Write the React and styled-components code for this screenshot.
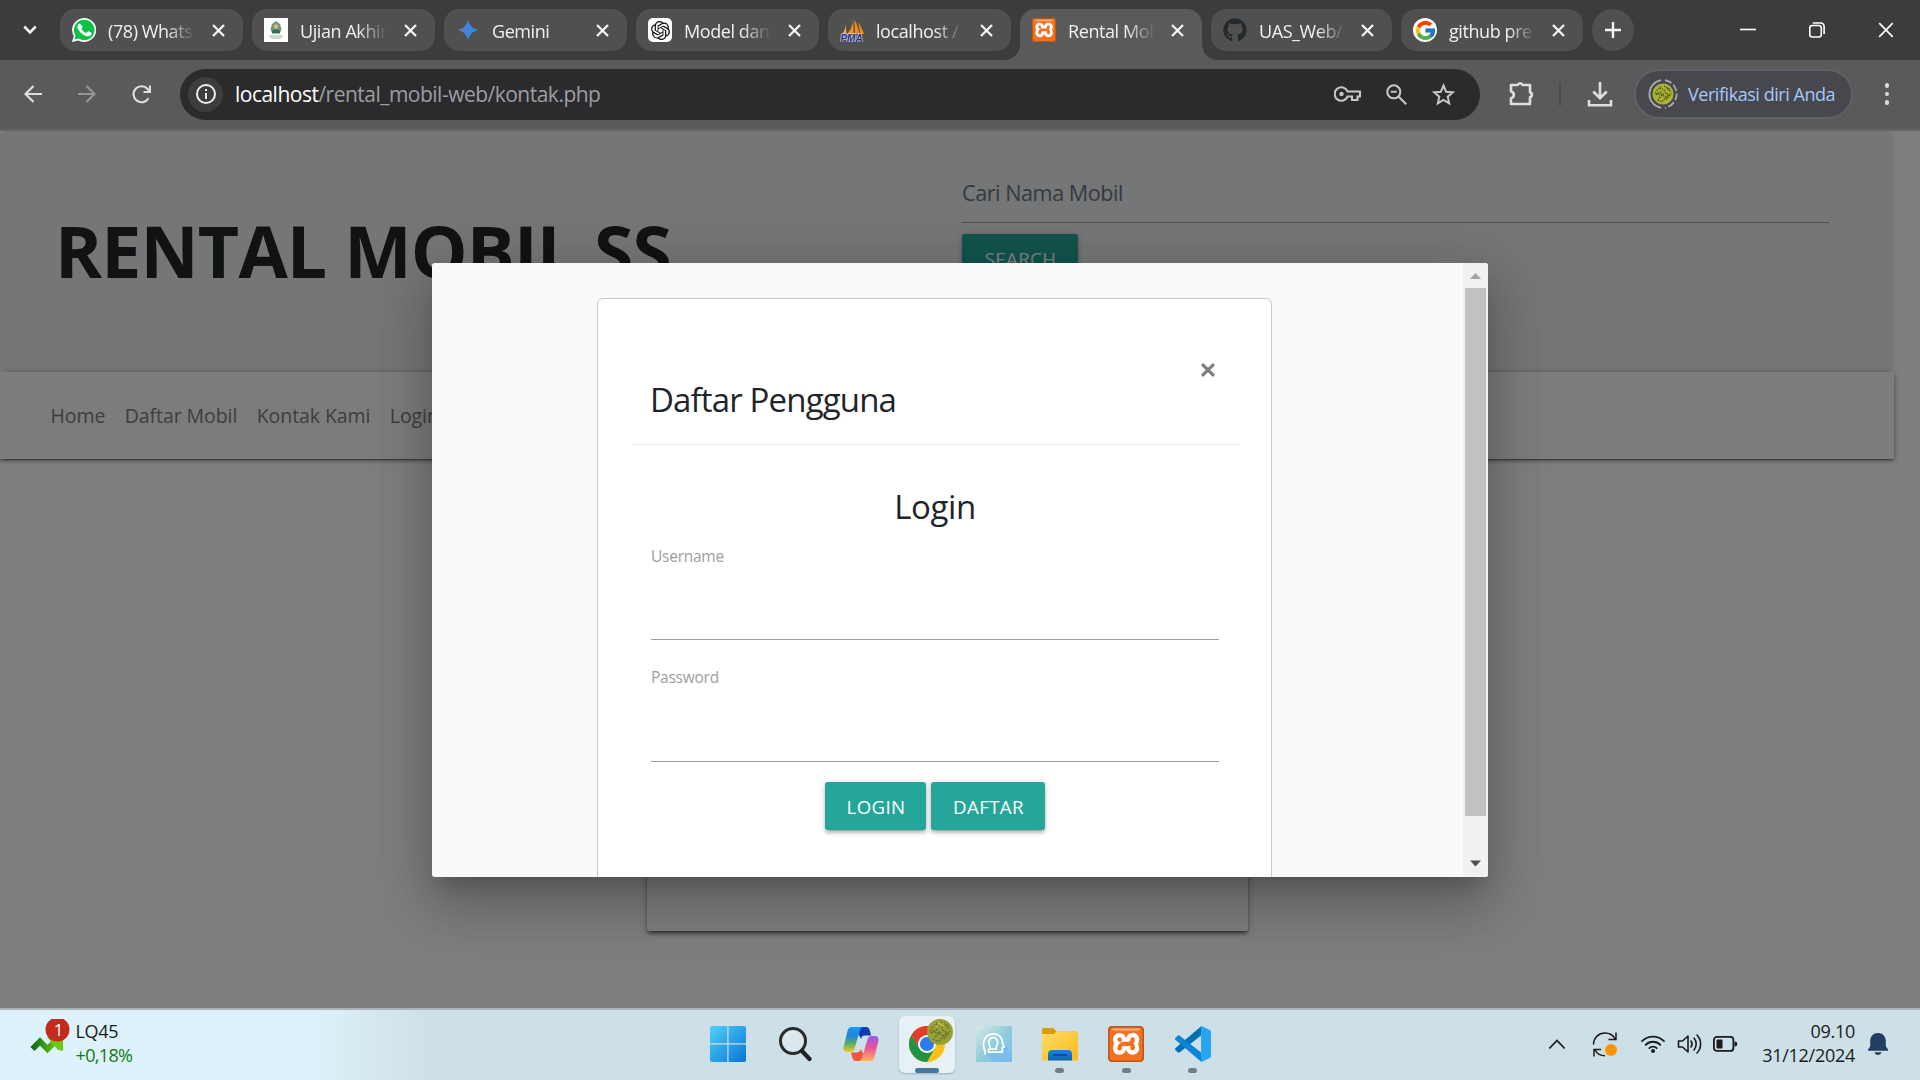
import React from "react";
import styled, { createGlobalStyle, css } from "styled-components";
import { FaGithub } from "react-icons/fa";
import { SiXampp, SiOpenai } from "react-icons/si";
import { FcGoogle } from "react-icons/fc";

const GlobalStyle = createGlobalStyle`
  *, *::before, *::after { box-sizing: border-box; }
  body {
    margin: 0;
    overflow: hidden;
    font-family: "Open Sans", "Noto Sans", sans-serif;
    background: #808080;
  }
  svg { display: block; flex: none; }
`;

const Screen = styled.div`
  display: flex;
  flex-direction: column;
  width: 1920px;
  height: 1080px;
  overflow: hidden;
`;

/* ---------- browser chrome ---------- */

const TabStrip = styled.div`
  display: flex;
  align-items: flex-start;
  gap: 9px;
  height: 60px;
  padding-top: 9px;
  background: #3c3c3c;
`;

const TabSearch = styled.div`
  display: flex;
  align-items: center;
  justify-content: center;
  width: 60px;
  height: 42px;
  margin-right: -9px;
`;

const Tab = styled.div`
  position: relative;
  display: flex;
  align-items: center;
  flex: none;
  width: ${(p) => p.$w}px;
  height: 42px;
  padding: 0 18px 0 12px;
  border-radius: 15px;
  background: #505050;
  ${(p) =>
    p.$active &&
    css`
      height: 51px;
      padding-bottom: 9px;
      border-radius: 15px 15px 0 0;
      background: #5a5a5a;
      &::before,
      &::after {
        content: "";
        position: absolute;
        bottom: 0;
        width: 15px;
        height: 15px;
      }
      &::before {
        left: -15px;
        background: radial-gradient(circle at 0 0, transparent 14.5px, #5a5a5a 15px);
      }
      &::after {
        right: -15px;
        background: radial-gradient(circle at 100% 0, transparent 14.5px, #5a5a5a 15px);
      }
    `}
`;

const Favicon = styled.div`
  display: flex;
  align-items: center;
  justify-content: center;
  width: 24px;
  height: 24px;
  overflow: hidden;
  border-radius: ${(p) => p.$radius || 0};
  background: ${(p) => p.$bg || "transparent"};
`;

const TabTitle = styled.div`
  width: 92px;
  margin: 2px 0 0 12px;
  overflow: hidden;
  white-space: nowrap;
  font-size: 18px;
  line-height: 24px;
  letter-spacing: -0.42px;
  color: #f0f0f0;
  mask-image: linear-gradient(90deg, #000 58px, transparent 87px);
`;

const TabClose = styled.div`
  margin-left: auto;
`;

const NewTab = styled.div`
  display: flex;
  align-items: center;
  justify-content: center;
  flex: none;
  width: 42px;
  height: 42px;
  border-radius: 50%;
  background: #505050;
`;

const WindowControls = styled.div`
  display: flex;
  height: 42px;
  margin-left: auto;
`;

const WindowControl = styled.div`
  display: flex;
  align-items: center;
  justify-content: center;
  width: 69px;
`;

const Toolbar = styled.div`
  display: flex;
  align-items: center;
  height: 71px;
  padding: 0 0 1px 6px;
  border-bottom: 2px solid #666;
  background: #5a5a5a;
`;

const NavButton = styled.div`
  display: flex;
  align-items: center;
  justify-content: center;
  width: 54px;
  height: 50px;
  opacity: ${(p) => (p.$dim ? 0.45 : 1)};
`;

const Omnibox = styled.div`
  display: flex;
  align-items: center;
  width: 1300px;
  height: 51px;
  margin-left: 12px;
  padding: 0 25px 0 8px;
  border-radius: 26px;
  background: #2b2b2d;
`;

const SiteInfo = styled.div`
  display: flex;
  align-items: center;
  justify-content: center;
  width: 35px;
  height: 35px;
  border-radius: 50%;
  background: #3d3d3f;
`;

const Url = styled.div`
  flex: 1;
  margin: 0 0 0 12px;
  font-size: 21px;
  line-height: 30px;
  letter-spacing: -0.51px;
  color: #9c9ea2;
  b {
    font-weight: 400;
    color: #fff;
  }
`;

const OmniboxIcons = styled.div`
  display: flex;
  align-items: center;
  gap: 25px;
`;

const Extensions = styled.div`
  margin-left: 27px;
`;

const Separator = styled.div`
  width: 2px;
  height: 24px;
  margin: 0 25px 0 24px;
  background: #4c4c4c;
`;

const Profile = styled.div`
  display: flex;
  align-items: center;
  gap: 10px;
  width: 219px;
  height: 50px;
  margin-left: 20px;
  padding-left: 12px;
  border: 2px solid #5e6166;
  border-radius: 25px;
  background: #46484d;
  font-size: 18px;
  line-height: 24px;
  letter-spacing: -0.45px;
  white-space: nowrap;
  color: #a8c7fa;
`;

const MenuDots = styled.div`
  display: flex;
  flex-direction: column;
  align-items: center;
  gap: 4px;
  width: 14px;
  margin-left: 27px;
  i {
    width: 4.5px;
    height: 4.5px;
    border-radius: 50%;
    background: #dcdcdc;
  }
`;

/* ---------- web page ---------- */

const Page = styled.div`
  position: relative;
  height: 877px;
  overflow: hidden;
  background: #fdfdfd;
  color: #212529;
`;

const Jumbotron = styled.header`
  display: flex;
  width: 1894px;
  height: 241px;
  border-radius: 7px;
  background: #e9ecef;
`;

const SiteTitle = styled.h1`
  width: 908px;
  margin: 0;
  padding: 77px 0 0 55px;
  font-size: 71.5px;
  font-weight: 700;
  line-height: 86px;
  letter-spacing: -0.85px;
`;

const SearchForm = styled.div`
  width: 867px;
  margin-left: 54px;
`;

const SearchField = styled.div`
  height: 92px;
  padding-top: 47px;
  border-bottom: 1px solid #9e9e9e;
  font-size: 21.6px;
  line-height: 30px;
  letter-spacing: -0.45px;
  color: #6c757d;
`;

const Button = styled.button`
  display: inline-flex;
  align-items: center;
  justify-content: center;
  width: ${(p) => p.$w}px;
  height: 48px;
  padding: 0 0 0 1px;
  border: 0;
  border-radius: 2.7px;
  background: #26a69a;
  color: #fff;
  font-family: inherit;
  font-size: 18.7px;
  letter-spacing: 0.35px;
  box-shadow: 0 2.7px 2.7px 0 rgba(0, 0, 0, 0.14), 0 4px 1.4px -2.7px rgba(0, 0, 0, 0.12),
    0 1.4px 6.8px 0 rgba(0, 0, 0, 0.2);
`;

const SearchButton = styled(Button)`
  margin-top: 11px;
`;

const NavBar = styled.nav`
  position: relative;
  display: flex;
  align-items: center;
  gap: 19.5px;
  width: 1894px;
  height: 87px;
  padding-left: 50.5px;
  background: #f8f8f8;
  font-size: 19.5px;
  line-height: 30px;
  letter-spacing: -0.08px;
  color: #7c7c7c;
  box-shadow: 0 2.7px 2.7px 0 rgba(0, 0, 0, 0.28), 0 4px 1.4px -2.7px rgba(0, 0, 0, 0.24),
    0 1.4px 6.8px 0 rgba(0, 0, 0, 0.3);
`;

const ContactCard = styled.section`
  width: 601px;
  height: 422px;
  margin: 50px 0 0 646.5px;
  border-radius: 2.7px;
  background: #fff;
  box-shadow: 0 2.7px 2.7px 0 rgba(0, 0, 0, 0.28), 0 4px 1.4px -2.7px rgba(0, 0, 0, 0.24),
    0 1.4px 6.8px 0 rgba(0, 0, 0, 0.3);
`;

const Overlay = styled.div`
  position: absolute;
  inset: 0;
  background: rgba(0, 0, 0, 0.5);
`;

const Modal = styled.div`
  position: absolute;
  top: 132px;
  left: 432px;
  display: flex;
  width: 1056px;
  height: 614px;
  overflow: hidden;
  border-radius: 2.7px;
  background: #fafafa;
  box-shadow: 0 32px 51px 4px rgba(0, 0, 0, 0.14), 0 12px 62px 11px rgba(0, 0, 0, 0.12),
    0 15px 20px -9px rgba(0, 0, 0, 0.2);
`;

const ModalContent = styled.div`
  flex: 1;
  padding: 35px 0 0 165px;
`;

const Dialog = styled.div`
  width: 675px;
  height: 760px;
  padding: 0 32px 0 33px;
  border: 1px solid #c8c8c8;
  border-radius: 6px;
  background: #fff;
`;

const DialogHeader = styled.div`
  display: flex;
  flex-direction: column;
  height: 146px;
  padding: 60px 18px 0 19px;
  border-bottom: 1px solid #e9ecef;
`;

const DialogClose = styled.div`
  display: flex;
  align-items: center;
  justify-content: center;
  align-self: flex-end;
  width: 22px;
  height: 22px;
  margin-right: 2px;
`;

const Heading = styled.h5`
  margin: ${(p) => (p.$center ? "1px 0 17px" : "-3px 0 0")};
  text-align: ${(p) => (p.$center ? "center" : "left")};
  font-size: 33px;
  font-weight: 400;
  line-height: 44px;
  letter-spacing: ${(p) => (p.$center ? "-0.4px" : "-0.85px")};
`;

const DialogBody = styled.div`
  display: flex;
  flex-direction: column;
  padding: 39px 20px 0;
`;

const Field = styled.label`
  display: block;
  height: ${(p) => p.$h}px;
  margin-bottom: ${(p) => p.$gap}px;
  border-bottom: 1px solid #9e9e9e;
  font-size: 15.5px;
  line-height: 21px;
  letter-spacing: -0.25px;
  color: #9e9e9e;
`;

const Actions = styled.div`
  display: flex;
  justify-content: center;
  gap: 5px;
`;

const Scrollbar = styled.div`
  display: flex;
  flex-direction: column;
  align-items: center;
  width: 25px;
  padding-top: 10px;
  background: #f1f1f1;
`;

const ScrollThumb = styled.div`
  width: 21px;
  height: 528px;
  margin: 8px 0 44px;
  background: #c1c1c1;
`;

/* ---------- taskbar ---------- */

const Taskbar = styled.footer`
  display: flex;
  height: 72px;
  border-top: 2px solid #aab4b8;
  background: linear-gradient(90deg, #def2fb 0, #def2fb 310px, #cddfe7 430px, #cde0e8 100%);
  font-size: 18px;
  line-height: 24px;
  color: #1b1b1b;
`;

const StockWidget = styled.div`
  display: flex;
  width: 695px;
  padding: 9px 0 0 30px;
`;

const StockText = styled.div`
  margin-left: 5.5px;
  letter-spacing: -0.3px;
`;

const Change = styled.div`
  letter-spacing: -0.65px;
  color: #0f7b0f;
`;

const Apps = styled.div`
  display: flex;
`;

const AppButton = styled.div`
  display: flex;
  flex-direction: column;
  align-items: center;
  width: 66.35px;
  padding-top: 6px;
`;

const AppTile = styled.div`
  display: flex;
  align-items: center;
  justify-content: center;
  width: 56px;
  height: 57px;
  padding-bottom: 2px;
  border-radius: 6px;
  background: ${(p) => (p.$active ? "#e7f0f4" : "transparent")};
  box-shadow: ${(p) => (p.$active ? "0 1px 2px rgba(0,0,0,.22)" : "none")};
`;

const Indicator = styled.div`
  z-index: 1;
  width: ${(p) => (p.$active ? 24 : 9)}px;
  height: 5px;
  margin-top: -5px;
  border-radius: 3px;
  background: ${(p) => (p.$active ? "#46789e" : "#737d82")};
`;

const Tray = styled.div`
  display: flex;
  flex: 1;
  align-items: center;
  justify-content: flex-end;
  padding: 0 31px 2px 0;
`;

const TrayIcon = styled.div`
  margin-right: ${(p) => p.$gap}px;
`;

const Clock = styled.div`
  width: 94px;
  margin: -2px 12px 0 0;
  text-align: right;
  letter-spacing: -0.28px;
`;

/* ---------- drawings ---------- */

const Cross = ({ size = 13, color = "#f4f4f4", weight = 2.3 }) => (
  <svg width={size} height={size} viewBox="0 0 13 13" stroke={color} strokeWidth={weight}>
    <path d="M1 1l11 11M12 1L1 12" />
  </svg>
);

const WhatsAppIcon = () => (
  <svg width="24" height="24" viewBox="0 0 24 24">
    <path d="M12 0a12 12 0 0 0-10.3 18L0 24l6.200-1.600A12 12 0 1 0 12 0z" fill="#fff" />
    <path d="M12 1.800a10.200 10.200 0 0 0-8.500 15.600L2.400 21.600l4.300-1.100A10.200 10.200 0 1 0 12 1.800z" fill="#0cc143" />
    <path d="M8.400 6.300c-.3-.6-.5-.6-.9-.6-1.100 0-2.100 1.200-2.100 3 0 1.700 1.200 3.300 1.400 3.500.2.300 2.400 3.800 6 5.200 2.900 1.100 3.500.9 4.200.8.700-.1 2.100-.9 2.300-1.700.3-.8.300-1.500.2-1.700-.1-.2-.4-.3-.9-.5l-2-1c-.4-.1-.6-.1-.8.200l-1 1.300c-.2.200-.4.200-.8 0-2-.9-3.300-2-4.400-3.900-.2-.3 0-.5.200-.7l.8-1.100c.1-.3.100-.4 0-.7z" fill="#fff" />
  </svg>
);

const CampusIcon = () => (
  <svg width="24" height="24" viewBox="0 0 24 24">
    <path fill="#fff" d="M0 0h24v24H0z" />
    <path d="M12 3l4 3 1.500 5-1.500 4H8l-1.500-4L8 6z" fill="#6f9a76" />
    <path d="M12 5.500l2.500 3-2.500 3-2.500-3z" fill="#e2b48e" />
    <path d="M8 12.500c2-1.500 6-1.500 8 0v3H8z" fill="#31724a" />
    <path d="M5 18h14M7 20h10" stroke="#8fb5a4" strokeWidth="1.200" />
  </svg>
);

const GeminiIcon = () => (
  <svg width="22" height="22" viewBox="0 0 24 24">
    <defs>
      <linearGradient id="gem" x1="0" y1="0" x2="1" y2="0">
        <stop offset="0" stopColor="#8e6bc4" />
        <stop offset=".45" stopColor="#3f83d8" />
        <stop offset="1" stopColor="#2196e8" />
      </linearGradient>
    </defs>
    <path d="M12 0c.9 6.500 5 11 12 12-7 1-11.100 5.500-12 12-.9-6.500-5-11-12-12C7 11 11.100 6.500 12 0z" fill="url(#gem)" />
  </svg>
);

const PmaIcon = () => (
  <svg width="24" height="24" viewBox="0 0 24 24">
    <path d="M5.500 4.500c.5 5-.8 8.500-3.500 11.500h4.500z" fill="#f5a94a" />
    <path d="M13 0c.3 6-2 12-6 16h6.500z" fill="#f7941d" />
    <path d="M14.500 1.500c0 5 .2 10 .4 14.500h4.600C18.500 11 17 6 14.500 1.500zM18 4c1 4 1.800 8 2.400 12H24c-1.500-4.500-3.500-8.500-6-12z" fill="#f08c14" />
    <text x="11.500" y="23.500" textAnchor="middle" fontFamily="Liberation Sans, sans-serif" fontSize="10" fontWeight="700" fontStyle="italic" fill="#2b3170" stroke="#c9cbe8" strokeWidth="1.500" paintOrder="stroke">
      PMA
    </text>
  </svg>
);

const XamppIcon = ({ size }) => (
  <svg width={size} height={size} viewBox="0 0 36 36">
    <rect x="4" y="5" width="28" height="27" fill="#fff" />
    <SiXampp size={36} color="#f3711f" />
    <rect x=".8" y=".8" width="34.400" height="34.400" rx="3.500" fill="none" stroke="#b9581c" strokeWidth="1.600" />
    <path d="M4 2.500h28c0 1.600-1.500 2-3 2H7c-1.500 0-3-.4-3-2z" fill="#f3b793" />
  </svg>
);

const olive = [
  [5, 9, 10, 4], [9, 5, 16, 9], [14, 3, 21, 7], [4, 14, 11, 10], [8, 18, 14, 12], [12, 22, 20, 14],
  [17, 20, 23, 12], [15, 11, 22, 15], [6, 20, 12, 23], [10, 13, 17, 17], [3, 11, 9, 14], [18, 6, 23, 10],
];

const Avatar = ({ size }) => (
  <svg width={size} height={size} viewBox="0 0 26 26">
    <circle cx="13" cy="13" r="13" fill="#98a136" />
    <path d="M5 7c6-6 14-4 16 1-5-1-8 2-16-1z" fill="#b2ba42" />
    {olive.map(([a, b, c, d], i) => (
      <path key={i} d={`M${a} ${b}L${c} ${d}`} stroke="#676e32" strokeWidth="1.600" strokeDasharray="1.800 1.200" />
    ))}
  </svg>
);

const ProfileAvatar = () => (
  <svg width="30" height="30" viewBox="0 0 30 30">
    <g transform="translate(4.500 4.500) scale(.81)">
      <circle cx="13" cy="13" r="13" fill="#aab52f" />
      {olive.map(([a, b, c, d], i) => (
        <path key={i} d={`M${a} ${b}L${c} ${d}`} stroke="#4f5724" strokeWidth="1.600" strokeDasharray="2 1" />
      ))}
    </g>
    <path d="M13 1.200a14 14 0 0 0 0 27.600" fill="none" stroke="#a9abb0" strokeWidth="1.800" />
    <path d="M17 1.200a14 14 0 0 1 0 27.600" fill="none" stroke="#a9abb0" strokeWidth="1.800" strokeDasharray="7 2.500" />
  </svg>
);

const WindowsIcon = () => (
  <svg width="36" height="36" viewBox="0 0 36 36">
    <defs>
      <linearGradient id="win" x1="0" y1="0" x2="1" y2="1">
        <stop offset="0" stopColor="#4fd0fb" />
        <stop offset="1" stopColor="#0a74d2" />
      </linearGradient>
    </defs>
    <path d="M2 0h15.300v17.300H0V2a2 2 0 0 1 2-2zM18.500 0H34a2 2 0 0 1 2 2v15.300H18.500zM0 18.600h17.300V36H2a2 2 0 0 1-2-2zM18.500 18.600H36V34a2 2 0 0 1-2 2H18.500z" fill="url(#win)" />
  </svg>
);

const SearchIcon = () => (
  <svg width="34" height="36" viewBox="0 0 34 36" fill="none">
    <circle cx="15" cy="15" r="12.500" stroke="#2b2b2b" strokeWidth="3" fill="#dbe7ec" />
    <path d="M24 25l7.500 8" stroke="#222" strokeWidth="4.200" strokeLinecap="round" />
  </svg>
);

const CopilotIcon = () => (
  <svg width="36" height="36" viewBox="0 0 36 36">
    <defs>
      <linearGradient id="cp1" x1="0" y1="0" x2="0" y2="1">
        <stop offset="0" stopColor="#1a9cf0" />
        <stop offset=".35" stopColor="#1f86dc" />
        <stop offset=".65" stopColor="#4fae6c" />
        <stop offset="1" stopColor="#f2cc1c" />
      </linearGradient>
      <linearGradient id="cp2" x1="0" y1="0" x2="0" y2="1">
        <stop offset="0" stopColor="#9b56ee" />
        <stop offset=".5" stopColor="#ee5591" />
        <stop offset="1" stopColor="#ffb457" />
      </linearGradient>
    </defs>
    <path d="M16 1h7c2 0 3 1 3.600 3l1.600 5.500h-6c-2.500 0-3.500 1-4.200 3.500L14 5z" fill="#1339b8" />
    <path d="M20 35h-7c-2 0-3-1-3.600-3L8 26.500h5.500c2.500 0 3.500-1 4.200-3.500L22 31z" fill="#f2563c" />
    <path d="M8.500 1H20c-2 .6-2.700 2-3.300 4l-5 17c-.9 3-2 4-4.500 4H4C.8 26 0 23.500.7 20.500L4.500 5C5.200 2.200 6.300 1 8.500 1z" fill="url(#cp1)" />
    <path d="M27.500 35H16c2-.6 2.700-2 3.300-4l5-17c.9-3 2-4 4.500-4H32c3.200 0 4 2.500 3.300 5.500L31.500 31c-.7 2.800-1.800 4-4 4z" fill="url(#cp2)" />
  </svg>
);

const AvatarBadge = styled.div`
  position: absolute;
  top: -7px;
  left: 18px;
`;

const ChromeBox = styled.div`
  position: relative;
`;

const ChromeIcon = () => (
  <ChromeBox>
    <svg width="36" height="36" viewBox="0 0 36 36">
      <circle cx="18" cy="18" r="18" fill="#fbc116" />
      <path d="M18 9h15.600A18 18 0 0 0 2.400 9l7.800 13.500z" fill="#e33b2e" />
      <path d="M2.400 9A18 18 0 0 0 18 36l7.800-13.500H10.200z" fill="#229342" />
      <circle cx="18" cy="18" r="9" fill="#fff" />
      <circle cx="18" cy="18" r="7.100" fill="#2d7bf0" />
    </svg>
    <AvatarBadge>
      <Avatar size={26} />
    </AvatarBadge>
  </ChromeBox>
);

const HeadIcon = () => (
  <svg width="36" height="36" viewBox="0 0 36 36" fill="none">
    <defs>
      <linearGradient id="hd" x1="0" y1="0" x2="1" y2="1">
        <stop offset="0" stopColor="#d8e9e8" />
        <stop offset=".5" stopColor="#8fcdd6" />
        <stop offset="1" stopColor="#7cc0f2" />
      </linearGradient>
    </defs>
    <path d="M0 0h36v36H0z" fill="url(#hd)" />
    <path d="M10 28l8 8h18V26l-8-8-2 8z" fill="#7cbcec" />
    <path d="M9 28.500V25C5.500 18 8 8 17 7.800c6.500 0 9.500 4.700 9.500 9.200l1.700 3.800-1.900.7v4.700H12.500v-3.500" stroke="#fff" strokeWidth="1.800" />
    <path d="M14 23v-2.800c-3-4-.5-8.700 3.200-8.700s6.100 4.700 3.200 8.700V23z" stroke="#fff" strokeWidth="1.600" />
  </svg>
);

const FolderIcon = () => (
  <svg width="36" height="36" viewBox="0 0 36 36">
    <defs>
      <linearGradient id="fo" x1="0" y1="0" x2="1" y2="1">
        <stop offset="0" stopColor="#ffdc6b" />
        <stop offset="1" stopColor="#fcba14" />
      </linearGradient>
      <linearGradient id="fb" x1="0" y1="0" x2="0" y2="1">
        <stop offset="0" stopColor="#1287dc" />
        <stop offset="1" stopColor="#0a62b4" />
      </linearGradient>
    </defs>
    <path d="M0 4c0-1.200.6-2 1.800-2h9.400l3.500 3.500H34V12H0z" fill="#dc9a08" />
    <path d="M0 8h11.500l3.500-2.700h19c1.200 0 2 .6 2 1.700v27.500H0z" fill="url(#fo)" />
    <path d="M6 34.500V28c0-2.600 1.600-4 4-4h16c2.500 0 4 1.400 4 4v6.500z" fill="url(#fb)" />
    <path d="M11 29h14" stroke="#0a4a90" strokeWidth="1.600" />
  </svg>
);

const VsCodeIcon = () => (
  <svg width="36" height="36" viewBox="0 0 36 36">
    <path d="M26.500 0L26 9.500 4.800 26.300c-.6.500-1.400.4-2 0L.6 24.300c-.8-.7-.8-1.700 0-2.400z" fill="#0070b5" />
    <path d="M26.500 36L26 26.500 4.800 9.700c-.6-.5-1.400-.4-2 0L.6 11.700c-.8.700-.8 1.700 0 2.400z" fill="#0a86d4" />
    <path d="M26.500 0L34.800 4c.8.400 1.200 1 1.200 1.900v24.200c0 .9-.4 1.500-1.200 1.900L26.500 36c-.6.200-.4-.3-.4-1V1c0-.8-.2-1 .4-1z" fill="#27a4f2" />
  </svg>
);

const tabs = [
  { title: "(78) Whats", w: 183, icon: <WhatsAppIcon /> },
  { title: "Ujian Akhir", w: 183, icon: <CampusIcon /> },
  { title: "Gemini", w: 183, icon: <GeminiIcon /> },
  { title: "Model dan", w: 183, icon: <SiOpenai size={19} color="#111" />, bg: "#fff", radius: "5px" },
  { title: "localhost /", w: 183, icon: <PmaIcon /> },
  { title: "Rental Mob", w: 182, icon: <XamppIcon size={24} />, active: true },
  { title: "UAS_Web/", w: 181, icon: <FaGithub size={24} color="#24292e" /> },
  { title: "github pre", w: 182, icon: <FcGoogle size={23} />, bg: "#fff", radius: "50%" },
];

const apps = [
  { icon: <WindowsIcon /> },
  { icon: <SearchIcon /> },
  { icon: <CopilotIcon /> },
  { icon: <ChromeIcon />, active: true, running: true },
  { icon: <HeadIcon /> },
  { icon: <FolderIcon />, running: true },
  { icon: <XamppIcon size={36} />, running: true },
  { icon: <VsCodeIcon />, running: true },
];

function Browser() {
  return (
    <>
      <TabStrip>
        <TabSearch>
          <svg width="14" height="10" viewBox="0 0 14 10" fill="none" stroke="#f4f4f4" strokeWidth="2.600">
            <path d="M1.300 1.500L7 7.300l5.700-5.800" />
          </svg>
        </TabSearch>
        {tabs.map((t) => (
          <Tab key={t.title} $w={t.w} $active={t.active}>
            <Favicon $bg={t.bg} $radius={t.radius}>{t.icon}</Favicon>
            <TabTitle>{t.title}</TabTitle>
            <TabClose><Cross /></TabClose>
          </Tab>
        ))}
        <NewTab>
          <svg width="16" height="16" viewBox="0 0 16 16" stroke="#f4f4f4" strokeWidth="2.400">
            <path d="M8 0v16M0 8h16" />
          </svg>
        </NewTab>
        <WindowControls>
          <WindowControl>
            <svg width="16" height="16" viewBox="0 0 16 16" stroke="#fff" strokeWidth="1.600"><path d="M0 7.500h16" /></svg>
          </WindowControl>
          <WindowControl>
            <svg width="16" height="16" viewBox="0 0 16 16" fill="none" stroke="#fff" strokeWidth="1.600">
              <rect x=".8" y="3.500" width="11.500" height="11.500" rx="2.500" />
              <path d="M3.800 1h8a3.300 3.300 0 0 1 3.300 3.300V12" />
            </svg>
          </WindowControl>
          <WindowControl>
            <Cross size={16} color="#fff" weight={1.4} />
          </WindowControl>
        </WindowControls>
      </TabStrip>
      <Toolbar>
        <NavButton>
          <svg width="18" height="18" viewBox="0 0 18 18" fill="none" stroke="#dedede" strokeWidth="2.200"><path d="M18 9H1.500M9.500 1L1.500 9l8 8" /></svg>
        </NavButton>
        <NavButton $dim>
          <svg width="18" height="18" viewBox="0 0 18 18" fill="none" stroke="#dedede" strokeWidth="2.200"><path d="M0 9h16.500M8.500 1l8 8-8 8" /></svg>
        </NavButton>
        <NavButton>
          <svg width="19" height="19" viewBox="0 0 19 19" fill="none" stroke="#dedede" strokeWidth="2.200">
            <path d="M16.500 13.200A8 8 0 1 1 15.600 4L18 6.500M18 .5v6.500h-6.500" />
          </svg>
        </NavButton>
        <Omnibox>
          <SiteInfo>
            <svg width="20" height="20" viewBox="0 0 20 20" fill="none" stroke="#eee" strokeWidth="2">
              <circle cx="10" cy="10" r="9" />
              <path d="M10 9v6M10 5v2" />
            </svg>
          </SiteInfo>
          <Url><b>localhost</b>/rental_mobil-web/kontak.php</Url>
          <OmniboxIcons>
            <svg width="27" height="16" viewBox="0 0 27 16" fill="none" stroke="#c7c7c7" strokeWidth="2.100">
              <path d="M13.600 5.500A6.700 6.700 0 1 0 13.600 10.500H18v3.500h5.500v-3.500H26V5.500z" />
              <circle cx="7.500" cy="8" r="2.200" fill="#c7c7c7" stroke="none" />
            </svg>
            <svg width="21" height="21" viewBox="0 0 21 21" fill="none" stroke="#c7c7c7" strokeWidth="2.100">
              <circle cx="7.800" cy="7.800" r="6.500" />
              <path d="M12.500 12.500l7.700 7.700M4.800 7.800h6" />
            </svg>
            <svg width="23" height="23" viewBox="0 0 23 23" fill="none" stroke="#c7c7c7" strokeWidth="2">
              <path d="M11.500 2.500l2.600 6.200 6.700.6-5.100 4.400 1.500 6.600-5.700-3.500-5.700 3.500 1.500-6.600-5.100-4.400 6.700-.6z" />
            </svg>
          </OmniboxIcons>
        </Omnibox>
        <Extensions>
          <svg width="28" height="28" viewBox="0 0 28 28" fill="none" stroke="#dedede" strokeWidth="2.600">
            <path d="M4 5h6.800a2.400 2.400 0 0 1 4.600 0H23v7.200a2.600 2.600 0 0 1 0 5V24H4v-5.800a3.400 3.400 0 0 0 0-6.700z" strokeLinejoin="round" />
          </svg>
        </Extensions>
        <Separator />
        <svg width="28" height="28" viewBox="0 0 28 28" fill="none" stroke="#dedede" strokeWidth="2.600">
          <path d="M14 2v16M7.300 11.500l6.700 6.700 6.700-6.700M3 20v5.200h22V20" />
        </svg>
        <Profile>
          <ProfileAvatar />
          Verifikasi diri Anda
        </Profile>
        <MenuDots><i /><i /><i /></MenuDots>
      </Toolbar>
    </>
  );
}

function RentalPage() {
  return (
    <Page>
      <Jumbotron>
        <SiteTitle>RENTAL MOBIL SS</SiteTitle>
        <SearchForm>
          <SearchField>Cari Nama Mobil</SearchField>
          <SearchButton $w={116}>SEARCH</SearchButton>
        </SearchForm>
      </Jumbotron>
      <NavBar>
        <span>Home</span>
        <span>Daftar Mobil</span>
        <span>Kontak Kami</span>
        <span>Login</span>
      </NavBar>
      <ContactCard />
      <Overlay />
      <Modal>
        <ModalContent>
          <Dialog>
            <DialogHeader>
              <DialogClose><Cross size={14} color="#7d7d7d" weight={2.8} /></DialogClose>
              <Heading>Daftar Pengguna</Heading>
            </DialogHeader>
            <DialogBody>
              <Heading $center>Login</Heading>
              <Field $h={94} $gap={27}>Username</Field>
              <Field $h={95} $gap={20}>Password</Field>
              <Actions>
                <Button $w={101}>LOGIN</Button>
                <Button $w={114}>DAFTAR</Button>
              </Actions>
            </DialogBody>
          </Dialog>
        </ModalContent>
        <Scrollbar>
          <svg width="11" height="7" viewBox="0 0 11 7"><path d="M5.500 0L11 6H0z" fill="#a3a3a3" /></svg>
          <ScrollThumb />
          <svg width="11" height="7" viewBox="0 0 11 7"><path d="M5.500 6.500L11 .5H0z" fill="#505050" /></svg>
        </Scrollbar>
      </Modal>
    </Page>
  );
}

function WindowsTaskbar() {
  return (
    <Taskbar>
      <StockWidget>
        <svg width="40" height="44" viewBox="0 0 40 44" fill="none">
          <defs>
            <linearGradient id="st" x1="0" y1="0" x2="1" y2="0">
              <stop offset="0" stopColor="#0b6b12" />
              <stop offset="1" stopColor="#6fce12" />
            </linearGradient>
          </defs>
          <path d="M2.500 30L10 22.500l7.500 7.500 10-10" stroke="url(#st)" strokeWidth="6" />
          <path d="M17 18h16v14l-5-1z" fill="#6cc914" />
          <circle cx="27.500" cy="10.500" r="12" fill="#c42b1c" />
          <text x="28.500" y="16.500" textAnchor="middle" fontSize="17" fill="#fff">1</text>
        </svg>
        <StockText>
          LQ45
          <Change>+0,18%</Change>
        </StockText>
      </StockWidget>
      <Apps>
        {apps.map((a, i) => (
          <AppButton key={i}>
            <AppTile $active={a.active}>{a.icon}</AppTile>
            {a.running && <Indicator $active={a.active} />}
          </AppButton>
        ))}
      </Apps>
      <Tray>
        <TrayIcon $gap={25}>
          <svg width="18" height="12" viewBox="0 0 18 12" fill="none" stroke="#1b1b1b" strokeWidth="1.800"><path d="M1.300 10.500L9 2.500l7.700 8" /></svg>
        </TrayIcon>
        <TrayIcon $gap={21}>
          <svg width="28" height="28" viewBox="0 0 28 28" fill="none" stroke="#1b1b1b" strokeWidth="1.500">
            <path d="M2.500 14.500C2.500 7.500 8 3 14 3c4.500 0 8.200 2.300 10.300 6M25 2.500v7h-7.500M3 26.500v-7h7M4 20c2 3.800 5.500 5.800 10 5.800" />
            <circle cx="20" cy="20" r="6" fill="#ff9408" stroke="none" />
          </svg>
        </TrayIcon>
        <TrayIcon $gap={11}>
          <svg width="26" height="20" viewBox="0 0 26 20" fill="none" stroke="#1b1b1b" strokeWidth="1.800" strokeLinecap="round">
            <path d="M2 7.200a15.500 15.500 0 0 1 22 0M5.700 10.800a10.300 10.300 0 0 1 14.600 0M9.300 14.200a5.200 5.200 0 0 1 7.400 0" />
            <circle cx="13" cy="17" r="2" fill="#1b1b1b" stroke="none" />
          </svg>
        </TrayIcon>
        <TrayIcon $gap={9}>
          <svg width="26" height="22" viewBox="0 0 26 22" fill="none" stroke="#1b1b1b" strokeWidth="1.600" strokeLinejoin="round" strokeLinecap="round">
            <path d="M1.500 8v6h4l5.500 5V3L5.500 8zM14 8c1.300 1.800 1.300 4.200 0 6M17 5c2.900 3.500 2.900 8.500 0 12M20 2c4.800 5.200 4.800 12.800 0 18" />
          </svg>
        </TrayIcon>
        <TrayIcon $gap={23}>
          <svg width="26" height="18" viewBox="0 0 26 18" fill="none">
            <rect x="1.900" y="1.900" width="19.500" height="14" rx="3" stroke="#1b1b1b" strokeWidth="1.800" />
            <rect x="4.500" y="4.500" width="6" height="9" rx="1" fill="#1b1b1b" />
            <path d="M22.500 6.500c2.300 0 2.700 1 2.700 2.500s-.4 2.500-2.700 2.500z" fill="#1b1b1b" />
          </svg>
        </TrayIcon>
        <Clock>
          09.10
          <br />
          31/12/2024
        </Clock>
        <svg width="22" height="24" viewBox="0 0 22 24" fill="#223f63">
          <path d="M11 1c-4.600 0-7.800 3.400-7.800 7.800v5.500L1 17.500v1.300h20v-1.300l-2.200-3.200V8.800C18.800 4.400 15.600 1 11 1zM7.500 20.300h7c-.5 1.800-1.800 2.700-3.500 2.700s-3-.9-3.500-2.700z" />
        </svg>
      </Tray>
    </Taskbar>
  );
}

export default function App() {
  return (
    <Screen>
      <GlobalStyle />
      <Browser />
      <RentalPage />
      <WindowsTaskbar />
    </Screen>
  );
}
